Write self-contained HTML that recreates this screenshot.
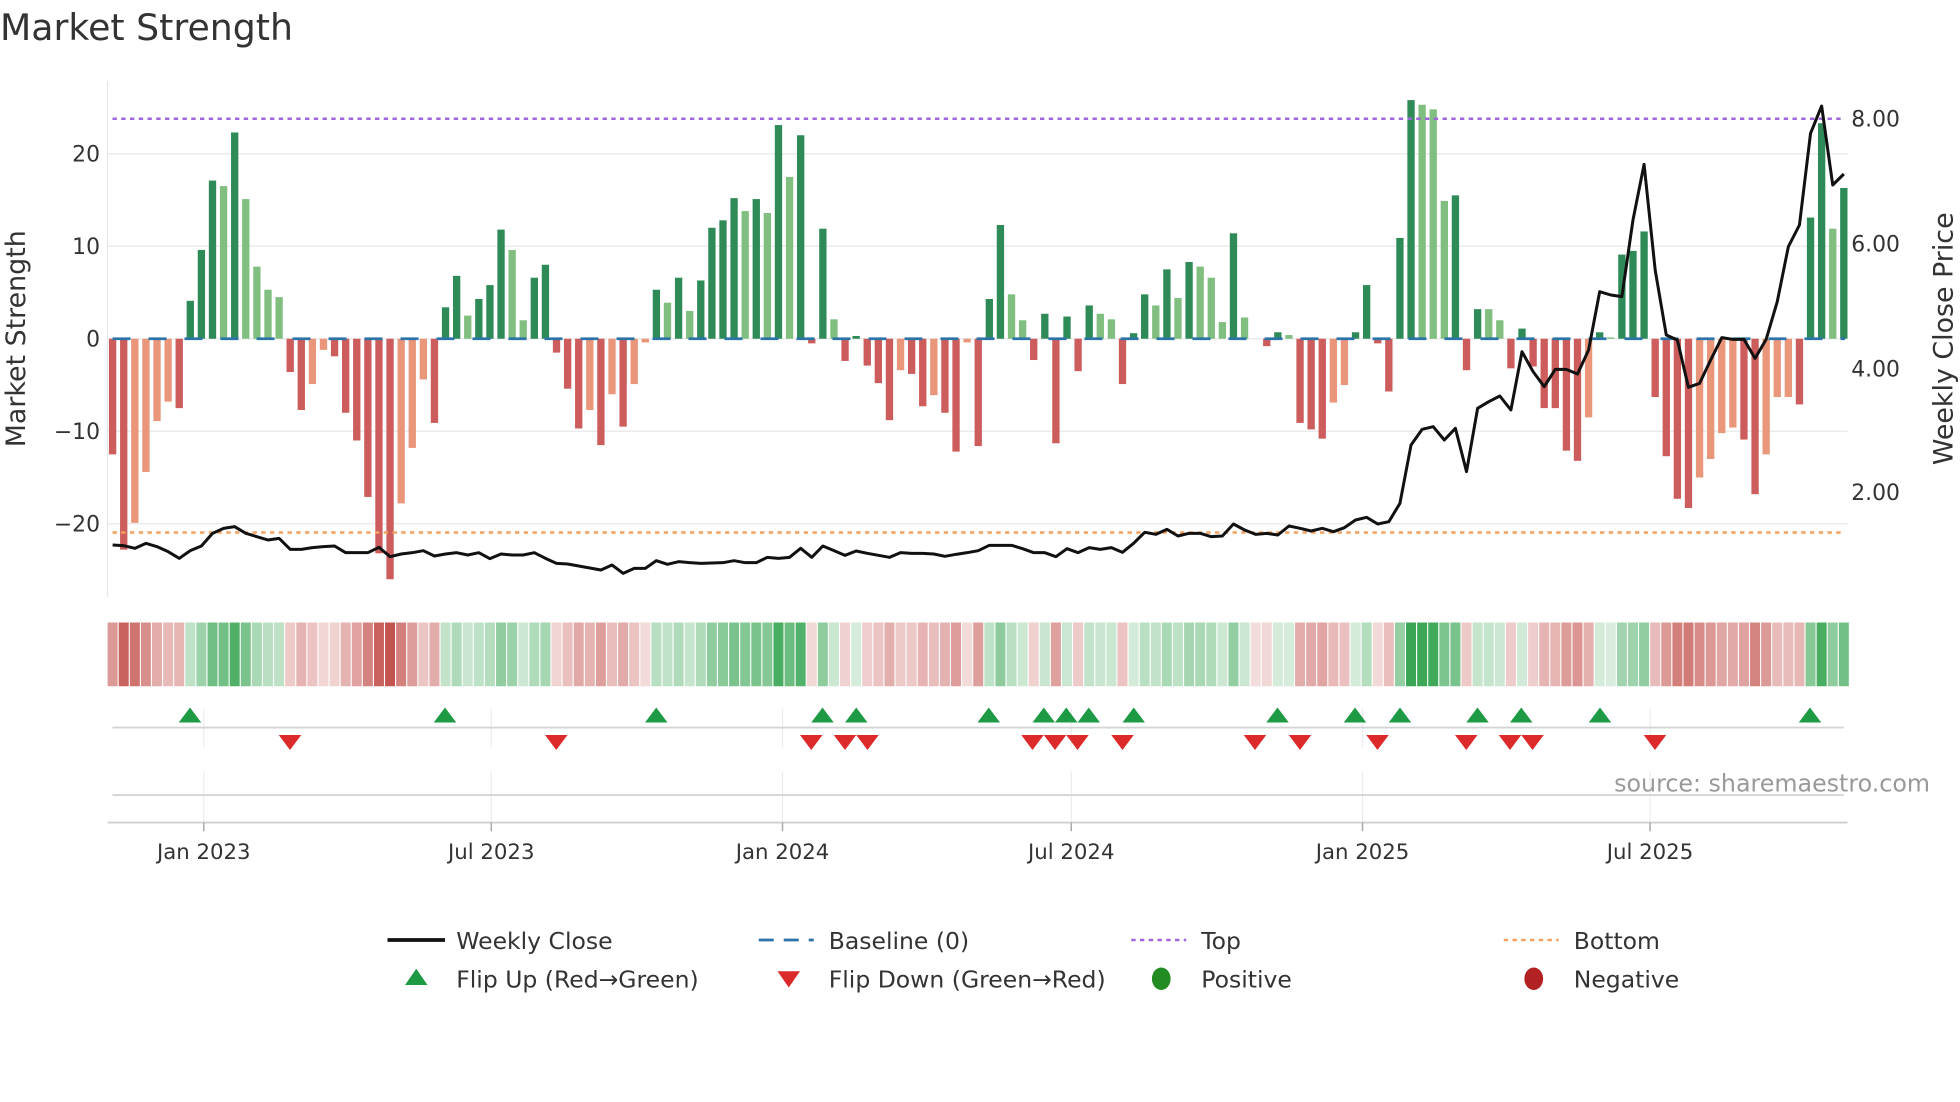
<!DOCTYPE html>
<html><head><meta charset="utf-8">
<style>
html,body{margin:0;padding:0;background:#fff;}
svg{display:block;}
text{font-family:"DejaVu Sans","Liberation Sans",sans-serif;fill:#333;}
.d{fill:#2e8b57}.l{fill:#80bf80}.r{fill:#cd5c5c}.s{fill:#e9967a}
.g{fill:#3aa655}.q{fill:#c4544f}
</style></head><body>
<svg width="1960" height="1102" viewBox="0 0 1568 881.6" xmlns="http://www.w3.org/2000/svg">
<rect width="1568" height="881.6" fill="#fff"/>
<text x="0" y="32" font-size="29">Market Strength</text>

<!-- grid -->
<g stroke="#ebebeb" stroke-width="1.2">
<line x1="86" x2="1478" y1="123" y2="123"/><line x1="86" x2="1478" y1="197" y2="197"/>
<line x1="86" x2="1478" y1="271" y2="271"/><line x1="86" x2="1478" y1="345" y2="345"/>
<line x1="86" x2="1478" y1="419" y2="419"/>
</g>
<line x1="86" x2="86" y1="65" y2="478" stroke="#e6e6e6" stroke-width="1"/>

<!-- left ticks -->
<g font-size="17.5" text-anchor="end">
<text x="80" y="129">20</text><text x="80" y="203">10</text><text x="80" y="277">0</text>
<text x="80" y="351">−10</text><text x="80" y="425">−20</text>
</g>
<g font-size="17.5">
<text x="1481" y="101">8.00</text><text x="1481" y="201">6.00</text>
<text x="1481" y="301">4.00</text><text x="1481" y="400">2.00</text>
</g>
<text font-size="21.5" transform="translate(20,271) rotate(-90)" text-anchor="middle">Market Strength</text>
<text font-size="21.5" transform="translate(1562,271) rotate(-90)" text-anchor="middle">Weekly Close Price</text>

<!-- bars -->
<g transform="translate(81.222,271) scale(8.878,-7.4)">
<rect class="r" x="0.67" width="0.66" y="-12.5" height="12.5"/>
<rect class="r" x="1.67" width="0.66" y="-22.8" height="22.8"/>
<rect class="s" x="2.67" width="0.66" y="-19.9" height="19.9"/>
<rect class="s" x="3.67" width="0.66" y="-14.4" height="14.4"/>
<rect class="s" x="4.67" width="0.66" y="-8.9" height="8.9"/>
<rect class="s" x="5.67" width="0.66" y="-6.8" height="6.8"/>
<rect class="r" x="6.67" width="0.66" y="-7.5" height="7.5"/>
<rect class="d" x="7.67" width="0.66" y="0" height="4.1"/>
<rect class="d" x="8.67" width="0.66" y="0" height="9.6"/>
<rect class="d" x="9.67" width="0.66" y="0" height="17.1"/>
<rect class="l" x="10.67" width="0.66" y="0" height="16.5"/>
<rect class="d" x="11.67" width="0.66" y="0" height="22.3"/>
<rect class="l" x="12.67" width="0.66" y="0" height="15.1"/>
<rect class="l" x="13.67" width="0.66" y="0" height="7.8"/>
<rect class="l" x="14.67" width="0.66" y="0" height="5.3"/>
<rect class="l" x="15.67" width="0.66" y="0" height="4.5"/>
<rect class="r" x="16.67" width="0.66" y="-3.6" height="3.6"/>
<rect class="r" x="17.67" width="0.66" y="-7.7" height="7.7"/>
<rect class="s" x="18.67" width="0.66" y="-4.9" height="4.9"/>
<rect class="s" x="19.67" width="0.66" y="-1.2" height="1.2"/>
<rect class="r" x="20.67" width="0.66" y="-1.9" height="1.9"/>
<rect class="r" x="21.67" width="0.66" y="-8" height="8"/>
<rect class="r" x="22.67" width="0.66" y="-11" height="11"/>
<rect class="r" x="23.67" width="0.66" y="-17.1" height="17.1"/>
<rect class="r" x="24.67" width="0.66" y="-23.2" height="23.2"/>
<rect class="r" x="25.67" width="0.66" y="-26" height="26"/>
<rect class="s" x="26.67" width="0.66" y="-17.8" height="17.8"/>
<rect class="s" x="27.67" width="0.66" y="-11.8" height="11.8"/>
<rect class="s" x="28.67" width="0.66" y="-4.4" height="4.4"/>
<rect class="r" x="29.67" width="0.66" y="-9.1" height="9.1"/>
<rect class="d" x="30.67" width="0.66" y="0" height="3.4"/>
<rect class="d" x="31.67" width="0.66" y="0" height="6.8"/>
<rect class="l" x="32.67" width="0.66" y="0" height="2.5"/>
<rect class="d" x="33.67" width="0.66" y="0" height="4.3"/>
<rect class="d" x="34.67" width="0.66" y="0" height="5.8"/>
<rect class="d" x="35.67" width="0.66" y="0" height="11.8"/>
<rect class="l" x="36.67" width="0.66" y="0" height="9.6"/>
<rect class="l" x="37.67" width="0.66" y="0" height="2"/>
<rect class="d" x="38.67" width="0.66" y="0" height="6.6"/>
<rect class="d" x="39.67" width="0.66" y="0" height="8"/>
<rect class="r" x="40.67" width="0.66" y="-1.5" height="1.5"/>
<rect class="r" x="41.67" width="0.66" y="-5.4" height="5.4"/>
<rect class="r" x="42.67" width="0.66" y="-9.7" height="9.7"/>
<rect class="s" x="43.67" width="0.66" y="-7.7" height="7.7"/>
<rect class="r" x="44.67" width="0.66" y="-11.5" height="11.5"/>
<rect class="s" x="45.67" width="0.66" y="-6" height="6"/>
<rect class="r" x="46.67" width="0.66" y="-9.5" height="9.5"/>
<rect class="s" x="47.67" width="0.66" y="-4.9" height="4.9"/>
<rect class="s" x="48.67" width="0.66" y="-0.4" height="0.4"/>
<rect class="d" x="49.67" width="0.66" y="0" height="5.3"/>
<rect class="l" x="50.67" width="0.66" y="0" height="3.9"/>
<rect class="d" x="51.67" width="0.66" y="0" height="6.6"/>
<rect class="l" x="52.67" width="0.66" y="0" height="3"/>
<rect class="d" x="53.67" width="0.66" y="0" height="6.3"/>
<rect class="d" x="54.67" width="0.66" y="0" height="12"/>
<rect class="d" x="55.67" width="0.66" y="0" height="12.8"/>
<rect class="d" x="56.67" width="0.66" y="0" height="15.2"/>
<rect class="l" x="57.67" width="0.66" y="0" height="13.8"/>
<rect class="d" x="58.67" width="0.66" y="0" height="15.1"/>
<rect class="l" x="59.67" width="0.66" y="0" height="13.6"/>
<rect class="d" x="60.67" width="0.66" y="0" height="23.1"/>
<rect class="l" x="61.67" width="0.66" y="0" height="17.5"/>
<rect class="d" x="62.67" width="0.66" y="0" height="22"/>
<rect class="r" x="63.67" width="0.66" y="-0.5" height="0.5"/>
<rect class="d" x="64.67" width="0.66" y="0" height="11.9"/>
<rect class="l" x="65.67" width="0.66" y="0" height="2.1"/>
<rect class="r" x="66.67" width="0.66" y="-2.4" height="2.4"/>
<rect class="d" x="67.67" width="0.66" y="0" height="0.3"/>
<rect class="r" x="68.67" width="0.66" y="-2.9" height="2.9"/>
<rect class="r" x="69.67" width="0.66" y="-4.8" height="4.8"/>
<rect class="r" x="70.67" width="0.66" y="-8.8" height="8.8"/>
<rect class="s" x="71.67" width="0.66" y="-3.4" height="3.4"/>
<rect class="r" x="72.67" width="0.66" y="-3.8" height="3.8"/>
<rect class="r" x="73.67" width="0.66" y="-7.3" height="7.3"/>
<rect class="s" x="74.67" width="0.66" y="-6.1" height="6.1"/>
<rect class="r" x="75.67" width="0.66" y="-8" height="8"/>
<rect class="r" x="76.67" width="0.66" y="-12.2" height="12.2"/>
<rect class="s" x="77.67" width="0.66" y="-0.4" height="0.4"/>
<rect class="r" x="78.67" width="0.66" y="-11.6" height="11.6"/>
<rect class="d" x="79.67" width="0.66" y="0" height="4.3"/>
<rect class="d" x="80.67" width="0.66" y="0" height="12.3"/>
<rect class="l" x="81.67" width="0.66" y="0" height="4.8"/>
<rect class="l" x="82.67" width="0.66" y="0" height="2"/>
<rect class="r" x="83.67" width="0.66" y="-2.3" height="2.3"/>
<rect class="d" x="84.67" width="0.66" y="0" height="2.7"/>
<rect class="r" x="85.67" width="0.66" y="-11.3" height="11.3"/>
<rect class="d" x="86.67" width="0.66" y="0" height="2.4"/>
<rect class="r" x="87.67" width="0.66" y="-3.5" height="3.5"/>
<rect class="d" x="88.67" width="0.66" y="0" height="3.6"/>
<rect class="l" x="89.67" width="0.66" y="0" height="2.7"/>
<rect class="l" x="90.67" width="0.66" y="0" height="2.1"/>
<rect class="r" x="91.67" width="0.66" y="-4.9" height="4.9"/>
<rect class="d" x="92.67" width="0.66" y="0" height="0.6"/>
<rect class="d" x="93.67" width="0.66" y="0" height="4.8"/>
<rect class="l" x="94.67" width="0.66" y="0" height="3.6"/>
<rect class="d" x="95.67" width="0.66" y="0" height="7.5"/>
<rect class="l" x="96.67" width="0.66" y="0" height="4.4"/>
<rect class="d" x="97.67" width="0.66" y="0" height="8.3"/>
<rect class="l" x="98.67" width="0.66" y="0" height="7.8"/>
<rect class="l" x="99.67" width="0.66" y="0" height="6.6"/>
<rect class="l" x="100.67" width="0.66" y="0" height="1.8"/>
<rect class="d" x="101.67" width="0.66" y="0" height="11.4"/>
<rect class="l" x="102.67" width="0.66" y="0" height="2.3"/>
<rect class="r" x="104.67" width="0.66" y="-0.8" height="0.8"/>
<rect class="d" x="105.67" width="0.66" y="0" height="0.7"/>
<rect class="l" x="106.67" width="0.66" y="0" height="0.4"/>
<rect class="r" x="107.67" width="0.66" y="-9.1" height="9.1"/>
<rect class="r" x="108.67" width="0.66" y="-9.8" height="9.8"/>
<rect class="r" x="109.67" width="0.66" y="-10.8" height="10.8"/>
<rect class="s" x="110.67" width="0.66" y="-6.9" height="6.9"/>
<rect class="s" x="111.67" width="0.66" y="-5" height="5"/>
<rect class="d" x="112.67" width="0.66" y="0" height="0.7"/>
<rect class="d" x="113.67" width="0.66" y="0" height="5.8"/>
<rect class="r" x="114.67" width="0.66" y="-0.5" height="0.5"/>
<rect class="r" x="115.67" width="0.66" y="-5.7" height="5.7"/>
<rect class="d" x="116.67" width="0.66" y="0" height="10.9"/>
<rect class="d" x="117.67" width="0.66" y="0" height="25.8"/>
<rect class="l" x="118.67" width="0.66" y="0" height="25.3"/>
<rect class="l" x="119.67" width="0.66" y="0" height="24.8"/>
<rect class="l" x="120.67" width="0.66" y="0" height="14.9"/>
<rect class="d" x="121.67" width="0.66" y="0" height="15.5"/>
<rect class="r" x="122.67" width="0.66" y="-3.4" height="3.4"/>
<rect class="d" x="123.67" width="0.66" y="0" height="3.2"/>
<rect class="l" x="124.67" width="0.66" y="0" height="3.2"/>
<rect class="l" x="125.67" width="0.66" y="0" height="2"/>
<rect class="r" x="126.67" width="0.66" y="-3.2" height="3.2"/>
<rect class="d" x="127.67" width="0.66" y="0" height="1.1"/>
<rect class="r" x="128.67" width="0.66" y="-3" height="3"/>
<rect class="r" x="129.67" width="0.66" y="-7.5" height="7.5"/>
<rect class="r" x="130.67" width="0.66" y="-7.5" height="7.5"/>
<rect class="r" x="131.67" width="0.66" y="-12.1" height="12.1"/>
<rect class="r" x="132.67" width="0.66" y="-13.2" height="13.2"/>
<rect class="s" x="133.67" width="0.66" y="-8.5" height="8.5"/>
<rect class="d" x="134.67" width="0.66" y="0" height="0.7"/>
<rect class="l" x="135.67" width="0.66" y="0" height="0.15"/>
<rect class="d" x="136.67" width="0.66" y="0" height="9.1"/>
<rect class="d" x="137.67" width="0.66" y="0" height="9.5"/>
<rect class="d" x="138.67" width="0.66" y="0" height="11.6"/>
<rect class="r" x="139.67" width="0.66" y="-6.3" height="6.3"/>
<rect class="r" x="140.67" width="0.66" y="-12.7" height="12.7"/>
<rect class="r" x="141.67" width="0.66" y="-17.3" height="17.3"/>
<rect class="r" x="142.67" width="0.66" y="-18.3" height="18.3"/>
<rect class="s" x="143.67" width="0.66" y="-15" height="15"/>
<rect class="s" x="144.67" width="0.66" y="-13" height="13"/>
<rect class="s" x="145.67" width="0.66" y="-10.2" height="10.2"/>
<rect class="s" x="146.67" width="0.66" y="-9.6" height="9.6"/>
<rect class="r" x="147.67" width="0.66" y="-10.9" height="10.9"/>
<rect class="r" x="148.67" width="0.66" y="-16.8" height="16.8"/>
<rect class="s" x="149.67" width="0.66" y="-12.5" height="12.5"/>
<rect class="s" x="150.67" width="0.66" y="-6.3" height="6.3"/>
<rect class="s" x="151.67" width="0.66" y="-6.3" height="6.3"/>
<rect class="r" x="152.67" width="0.66" y="-7.1" height="7.1"/>
<rect class="d" x="153.67" width="0.66" y="0" height="13.1"/>
<rect class="d" x="154.67" width="0.66" y="0" height="23.3"/>
<rect class="l" x="155.67" width="0.66" y="0" height="11.9"/>
<rect class="d" x="156.67" width="0.66" y="0" height="16.3"/>
</g>

<!-- baseline / top / bottom -->
<line x1="90" x2="1476" y1="271" y2="271" stroke="#2b73a8" stroke-width="2.2" stroke-dasharray="14.4 14.4"/>
<line x1="90" x2="1476" y1="95" y2="95" stroke="#a066dc" stroke-width="2" stroke-dasharray="3.5 3.5"/>
<line x1="90" x2="1476" y1="426" y2="426" stroke="#f2a160" stroke-width="2" stroke-dasharray="3.5 3.5"/>

<!-- price -->
<g transform="translate(81.222,80) scale(8.878,0.266667)">
<polyline fill="none" stroke="#111" stroke-width="3" vector-effect="non-scaling-stroke" stroke-linejoin="round" points="1,1335 2,1337 3,1345 4,1330 5,1340 6,1355 7,1375 8,1352 9,1338 10,1300 11,1285 12,1280 13,1300 14,1310 15,1320 16,1315 17,1348 18,1348 19,1343 20,1340 21,1338 22,1358 23,1358 24,1358 25,1342 26,1370 27,1362 28,1358 29,1352 30,1368 31,1362 32,1358 33,1365 34,1358 35,1376 36,1362 37,1365 38,1365 39,1358 40,1375 41,1390 42,1392 43,1398 44,1404 45,1410 46,1395 47,1420 48,1405 49,1405 50,1382 51,1393 52,1385 53,1388 54,1390 55,1389 56,1388 57,1382 58,1388 59,1388 60,1372 61,1375 62,1372 63,1345 64,1372 65,1338 66,1352 67,1366 68,1353 69,1360 70,1366 71,1372 72,1358 73,1360 74,1360 75,1362 76,1369 77,1363 78,1358 79,1352 80,1336 81,1336 82,1336 83,1346 84,1358 85,1358 86,1370 87,1346 88,1358 89,1343 90,1348 91,1343 92,1357 93,1330 94,1297 95,1303 96,1288 97,1308 98,1300 99,1300 100,1310 101,1308 102,1272 103,1290 104,1303 105,1300 106,1305 107,1278 108,1285 109,1293 110,1285 111,1295 112,1283 113,1260 114,1252 115,1272 116,1265 117,1210 118,1035 119,988 120,980 121,1020 122,985 123,1115 124,925 125,905 126,888 127,930 128,755 129,815 130,860 131,808 132,808 133,822 134,750 135,575 136,585 137,590 138,360 139,193 140,510 141,705 142,720 143,862 144,850 145,780 146,713 147,718 148,718 149,775 150,718 151,605 152,440 153,375 154,100 155,18 156,255 157,222"/>
</g>

<!-- heat strip -->
<g transform="translate(81.222,498) scale(8.878,1)">
<rect class="q" x="0.55" width="0.9" height="51" fill-opacity=".59"/>
<rect class="q" x="1.55" width="0.9" height="51" fill-opacity=".91"/>
<rect class="q" x="2.55" width="0.9" height="51" fill-opacity=".82"/>
<rect class="q" x="3.55" width="0.9" height="51" fill-opacity=".65"/>
<rect class="q" x="4.55" width="0.9" height="51" fill-opacity=".48"/>
<rect class="q" x="5.55" width="0.9" height="51" fill-opacity=".41"/>
<rect class="q" x="6.55" width="0.9" height="51" fill-opacity=".43"/>
<rect class="g" x="7.55" width="0.9" height="51" fill-opacity=".33"/>
<rect class="g" x="8.55" width="0.9" height="51" fill-opacity=".5"/>
<rect class="g" x="9.55" width="0.9" height="51" fill-opacity=".73"/>
<rect class="g" x="10.55" width="0.9" height="51" fill-opacity=".71"/>
<rect class="g" x="11.55" width="0.9" height="51" fill-opacity=".89"/>
<rect class="g" x="12.55" width="0.9" height="51" fill-opacity=".67"/>
<rect class="g" x="13.55" width="0.9" height="51" fill-opacity=".44"/>
<rect class="g" x="14.55" width="0.9" height="51" fill-opacity=".36"/>
<rect class="g" x="15.55" width="0.9" height="51" fill-opacity=".34"/>
<rect class="q" x="16.55" width="0.9" height="51" fill-opacity=".31"/>
<rect class="q" x="17.55" width="0.9" height="51" fill-opacity=".44"/>
<rect class="q" x="18.55" width="0.9" height="51" fill-opacity=".35"/>
<rect class="q" x="19.55" width="0.9" height="51" fill-opacity=".24"/>
<rect class="q" x="20.55" width="0.9" height="51" fill-opacity=".26"/>
<rect class="q" x="21.55" width="0.9" height="51" fill-opacity=".45"/>
<rect class="q" x="22.55" width="0.9" height="51" fill-opacity=".54"/>
<rect class="q" x="23.55" width="0.9" height="51" fill-opacity=".73"/>
<rect class="q" x="24.55" width="0.9" height="51" fill-opacity=".92"/>
<rect class="q" x="25.55" width="0.9" height="51" fill-opacity="1"/>
<rect class="q" x="26.55" width="0.9" height="51" fill-opacity=".75"/>
<rect class="q" x="27.55" width="0.9" height="51" fill-opacity=".57"/>
<rect class="q" x="28.55" width="0.9" height="51" fill-opacity=".34"/>
<rect class="q" x="29.55" width="0.9" height="51" fill-opacity=".48"/>
<rect class="g" x="30.55" width="0.9" height="51" fill-opacity=".31"/>
<rect class="g" x="31.55" width="0.9" height="51" fill-opacity=".41"/>
<rect class="g" x="32.55" width="0.9" height="51" fill-opacity=".28"/>
<rect class="g" x="33.55" width="0.9" height="51" fill-opacity=".33"/>
<rect class="g" x="34.55" width="0.9" height="51" fill-opacity=".38"/>
<rect class="g" x="35.55" width="0.9" height="51" fill-opacity=".57"/>
<rect class="g" x="36.55" width="0.9" height="51" fill-opacity=".5"/>
<rect class="g" x="37.55" width="0.9" height="51" fill-opacity=".26"/>
<rect class="g" x="38.55" width="0.9" height="51" fill-opacity=".4"/>
<rect class="g" x="39.55" width="0.9" height="51" fill-opacity=".45"/>
<rect class="q" x="40.55" width="0.9" height="51" fill-opacity=".25"/>
<rect class="q" x="41.55" width="0.9" height="51" fill-opacity=".37"/>
<rect class="q" x="42.55" width="0.9" height="51" fill-opacity=".5"/>
<rect class="q" x="43.55" width="0.9" height="51" fill-opacity=".44"/>
<rect class="q" x="44.55" width="0.9" height="51" fill-opacity=".56"/>
<rect class="q" x="45.55" width="0.9" height="51" fill-opacity=".39"/>
<rect class="q" x="46.55" width="0.9" height="51" fill-opacity=".49"/>
<rect class="q" x="47.55" width="0.9" height="51" fill-opacity=".35"/>
<rect class="q" x="48.55" width="0.9" height="51" fill-opacity=".21"/>
<rect class="g" x="49.55" width="0.9" height="51" fill-opacity=".36"/>
<rect class="g" x="50.55" width="0.9" height="51" fill-opacity=".32"/>
<rect class="g" x="51.55" width="0.9" height="51" fill-opacity=".4"/>
<rect class="g" x="52.55" width="0.9" height="51" fill-opacity=".29"/>
<rect class="g" x="53.55" width="0.9" height="51" fill-opacity=".4"/>
<rect class="g" x="54.55" width="0.9" height="51" fill-opacity=".57"/>
<rect class="g" x="55.55" width="0.9" height="51" fill-opacity=".6"/>
<rect class="g" x="56.55" width="0.9" height="51" fill-opacity=".67"/>
<rect class="g" x="57.55" width="0.9" height="51" fill-opacity=".63"/>
<rect class="g" x="58.55" width="0.9" height="51" fill-opacity=".67"/>
<rect class="g" x="59.55" width="0.9" height="51" fill-opacity=".62"/>
<rect class="g" x="60.55" width="0.9" height="51" fill-opacity=".92"/>
<rect class="g" x="61.55" width="0.9" height="51" fill-opacity=".74"/>
<rect class="g" x="62.55" width="0.9" height="51" fill-opacity=".88"/>
<rect class="q" x="63.55" width="0.9" height="51" fill-opacity=".22"/>
<rect class="g" x="64.55" width="0.9" height="51" fill-opacity=".57"/>
<rect class="g" x="65.55" width="0.9" height="51" fill-opacity=".27"/>
<rect class="q" x="66.55" width="0.9" height="51" fill-opacity=".27"/>
<rect class="g" x="67.55" width="0.9" height="51" fill-opacity=".21"/>
<rect class="q" x="68.55" width="0.9" height="51" fill-opacity=".29"/>
<rect class="q" x="69.55" width="0.9" height="51" fill-opacity=".35"/>
<rect class="q" x="70.55" width="0.9" height="51" fill-opacity=".47"/>
<rect class="q" x="71.55" width="0.9" height="51" fill-opacity=".31"/>
<rect class="q" x="72.55" width="0.9" height="51" fill-opacity=".32"/>
<rect class="q" x="73.55" width="0.9" height="51" fill-opacity=".43"/>
<rect class="q" x="74.55" width="0.9" height="51" fill-opacity=".39"/>
<rect class="q" x="75.55" width="0.9" height="51" fill-opacity=".45"/>
<rect class="q" x="76.55" width="0.9" height="51" fill-opacity=".58"/>
<rect class="q" x="77.55" width="0.9" height="51" fill-opacity=".21"/>
<rect class="q" x="78.55" width="0.9" height="51" fill-opacity=".56"/>
<rect class="g" x="79.55" width="0.9" height="51" fill-opacity=".33"/>
<rect class="g" x="80.55" width="0.9" height="51" fill-opacity=".58"/>
<rect class="g" x="81.55" width="0.9" height="51" fill-opacity=".35"/>
<rect class="g" x="82.55" width="0.9" height="51" fill-opacity=".26"/>
<rect class="q" x="83.55" width="0.9" height="51" fill-opacity=".27"/>
<rect class="g" x="84.55" width="0.9" height="51" fill-opacity=".28"/>
<rect class="q" x="85.55" width="0.9" height="51" fill-opacity=".55"/>
<rect class="g" x="86.55" width="0.9" height="51" fill-opacity=".27"/>
<rect class="q" x="87.55" width="0.9" height="51" fill-opacity=".31"/>
<rect class="g" x="88.55" width="0.9" height="51" fill-opacity=".31"/>
<rect class="g" x="89.55" width="0.9" height="51" fill-opacity=".28"/>
<rect class="g" x="90.55" width="0.9" height="51" fill-opacity=".27"/>
<rect class="q" x="91.55" width="0.9" height="51" fill-opacity=".35"/>
<rect class="g" x="92.55" width="0.9" height="51" fill-opacity=".22"/>
<rect class="g" x="93.55" width="0.9" height="51" fill-opacity=".35"/>
<rect class="g" x="94.55" width="0.9" height="51" fill-opacity=".31"/>
<rect class="g" x="95.55" width="0.9" height="51" fill-opacity=".43"/>
<rect class="g" x="96.55" width="0.9" height="51" fill-opacity=".34"/>
<rect class="g" x="97.55" width="0.9" height="51" fill-opacity=".46"/>
<rect class="g" x="98.55" width="0.9" height="51" fill-opacity=".44"/>
<rect class="g" x="99.55" width="0.9" height="51" fill-opacity=".4"/>
<rect class="g" x="100.55" width="0.9" height="51" fill-opacity=".26"/>
<rect class="g" x="101.55" width="0.9" height="51" fill-opacity=".55"/>
<rect class="g" x="102.55" width="0.9" height="51" fill-opacity=".27"/>
<rect class="q" x="103.55" width="0.9" height="51" fill-opacity=".2"/>
<rect class="q" x="104.55" width="0.9" height="51" fill-opacity=".23"/>
<rect class="g" x="105.55" width="0.9" height="51" fill-opacity=".22"/>
<rect class="g" x="106.55" width="0.9" height="51" fill-opacity=".21"/>
<rect class="q" x="107.55" width="0.9" height="51" fill-opacity=".48"/>
<rect class="q" x="108.55" width="0.9" height="51" fill-opacity=".5"/>
<rect class="q" x="109.55" width="0.9" height="51" fill-opacity=".53"/>
<rect class="q" x="110.55" width="0.9" height="51" fill-opacity=".41"/>
<rect class="q" x="111.55" width="0.9" height="51" fill-opacity=".36"/>
<rect class="g" x="112.55" width="0.9" height="51" fill-opacity=".22"/>
<rect class="g" x="113.55" width="0.9" height="51" fill-opacity=".38"/>
<rect class="q" x="114.55" width="0.9" height="51" fill-opacity=".22"/>
<rect class="q" x="115.55" width="0.9" height="51" fill-opacity=".38"/>
<rect class="g" x="116.55" width="0.9" height="51" fill-opacity=".54"/>
<rect class="g" x="117.55" width="0.9" height="51" fill-opacity="1"/>
<rect class="g" x="118.55" width="0.9" height="51" fill-opacity=".98"/>
<rect class="g" x="119.55" width="0.9" height="51" fill-opacity=".97"/>
<rect class="g" x="120.55" width="0.9" height="51" fill-opacity=".66"/>
<rect class="g" x="121.55" width="0.9" height="51" fill-opacity=".68"/>
<rect class="q" x="122.55" width="0.9" height="51" fill-opacity=".31"/>
<rect class="g" x="123.55" width="0.9" height="51" fill-opacity=".3"/>
<rect class="g" x="124.55" width="0.9" height="51" fill-opacity=".3"/>
<rect class="g" x="125.55" width="0.9" height="51" fill-opacity=".26"/>
<rect class="q" x="126.55" width="0.9" height="51" fill-opacity=".3"/>
<rect class="g" x="127.55" width="0.9" height="51" fill-opacity=".23"/>
<rect class="q" x="128.55" width="0.9" height="51" fill-opacity=".29"/>
<rect class="q" x="129.55" width="0.9" height="51" fill-opacity=".43"/>
<rect class="q" x="130.55" width="0.9" height="51" fill-opacity=".43"/>
<rect class="q" x="131.55" width="0.9" height="51" fill-opacity=".58"/>
<rect class="q" x="132.55" width="0.9" height="51" fill-opacity=".61"/>
<rect class="q" x="133.55" width="0.9" height="51" fill-opacity=".46"/>
<rect class="g" x="134.55" width="0.9" height="51" fill-opacity=".22"/>
<rect class="g" x="135.55" width="0.9" height="51" fill-opacity=".2"/>
<rect class="g" x="136.55" width="0.9" height="51" fill-opacity=".48"/>
<rect class="g" x="137.55" width="0.9" height="51" fill-opacity=".49"/>
<rect class="g" x="138.55" width="0.9" height="51" fill-opacity=".56"/>
<rect class="q" x="139.55" width="0.9" height="51" fill-opacity=".4"/>
<rect class="q" x="140.55" width="0.9" height="51" fill-opacity=".59"/>
<rect class="q" x="141.55" width="0.9" height="51" fill-opacity=".74"/>
<rect class="q" x="142.55" width="0.9" height="51" fill-opacity=".77"/>
<rect class="q" x="143.55" width="0.9" height="51" fill-opacity=".67"/>
<rect class="q" x="144.55" width="0.9" height="51" fill-opacity=".6"/>
<rect class="q" x="145.55" width="0.9" height="51" fill-opacity=".52"/>
<rect class="q" x="146.55" width="0.9" height="51" fill-opacity=".5"/>
<rect class="q" x="147.55" width="0.9" height="51" fill-opacity=".54"/>
<rect class="q" x="148.55" width="0.9" height="51" fill-opacity=".72"/>
<rect class="q" x="149.55" width="0.9" height="51" fill-opacity=".59"/>
<rect class="q" x="150.55" width="0.9" height="51" fill-opacity=".4"/>
<rect class="q" x="151.55" width="0.9" height="51" fill-opacity=".4"/>
<rect class="q" x="152.55" width="0.9" height="51" fill-opacity=".42"/>
<rect class="g" x="153.55" width="0.9" height="51" fill-opacity=".61"/>
<rect class="g" x="154.55" width="0.9" height="51" fill-opacity=".92"/>
<rect class="g" x="155.55" width="0.9" height="51" fill-opacity=".57"/>
<rect class="g" x="156.55" width="0.9" height="51" fill-opacity=".71"/>
</g>

<!-- lower panels -->
<g stroke="#ececec" stroke-width="1">
<line x1="163" x2="163" y1="567" y2="598"/><line x1="393" x2="393" y1="567" y2="598"/>
<line x1="626" x2="626" y1="567" y2="598"/><line x1="857" x2="857" y1="567" y2="598"/>
<line x1="1090" x2="1090" y1="567" y2="598"/><line x1="1320" x2="1320" y1="567" y2="598"/>
<line x1="163" x2="163" y1="617" y2="658"/><line x1="393" x2="393" y1="617" y2="658"/>
<line x1="626" x2="626" y1="617" y2="658"/><line x1="857" x2="857" y1="617" y2="658"/>
<line x1="1090" x2="1090" y1="617" y2="658"/><line x1="1320" x2="1320" y1="617" y2="658"/>
</g>
<line x1="90" x2="1475" y1="582" y2="582" stroke="#d4d4d4" stroke-width="1.5"/>
<line x1="90" x2="1475" y1="636" y2="636" stroke="#d4d4d4" stroke-width="1.5"/>
<line x1="86" x2="1478" y1="658" y2="658" stroke="#cfcfcf" stroke-width="1.5"/>
<g stroke="#aaa" stroke-width="1.2">
<line x1="163" x2="163" y1="658" y2="665"/><line x1="393" x2="393" y1="658" y2="665"/>
<line x1="626" x2="626" y1="658" y2="665"/><line x1="857" x2="857" y1="658" y2="665"/>
<line x1="1090" x2="1090" y1="658" y2="665"/><line x1="1320" x2="1320" y1="658" y2="665"/>
</g>
<g font-size="17" text-anchor="middle">
<text x="163" y="687">Jan 2023</text><text x="393" y="687">Jul 2023</text>
<text x="626" y="687">Jan 2024</text><text x="857" y="687">Jul 2024</text>
<text x="1090" y="687">Jan 2025</text><text x="1320" y="687">Jul 2025</text>
</g>
<text x="1544" y="633" font-size="19" text-anchor="end" style="fill:#999">source: sharemaestro.com</text>

<!-- flip markers -->
<g fill="#1e9a44">
<path d="M143,578h18l-9,-12z"/><path d="M347,578h18l-9,-12z"/><path d="M516,578h18l-9,-12z"/>
<path d="M649,578h18l-9,-12z"/><path d="M676,578h18l-9,-12z"/><path d="M782,578h18l-9,-12z"/>
<path d="M826,578h18l-9,-12z"/><path d="M844,578h18l-9,-12z"/><path d="M862,578h18l-9,-12z"/>
<path d="M898,578h18l-9,-12z"/><path d="M1013,578h18l-9,-12z"/><path d="M1075,578h18l-9,-12z"/>
<path d="M1111,578h18l-9,-12z"/><path d="M1173,578h18l-9,-12z"/><path d="M1208,578h18l-9,-12z"/>
<path d="M1271,578h18l-9,-12z"/><path d="M1439,578h18l-9,-12z"/>
</g>
<g fill="#dc2a2a">
<path d="M223,588h18l-9,12z"/><path d="M436,588h18l-9,12z"/><path d="M640,588h18l-9,12z"/>
<path d="M667,588h18l-9,12z"/><path d="M685,588h18l-9,12z"/><path d="M817,588h18l-9,12z"/>
<path d="M835,588h18l-9,12z"/><path d="M853,588h18l-9,12z"/><path d="M889,588h18l-9,12z"/>
<path d="M995,588h18l-9,12z"/><path d="M1031,588h18l-9,12z"/><path d="M1093,588h18l-9,12z"/>
<path d="M1164,588h18l-9,12z"/><path d="M1199,588h18l-9,12z"/><path d="M1217,588h18l-9,12z"/>
<path d="M1315,588h18l-9,12z"/>
</g>

<!-- legend -->
<g font-size="18.8">
<line x1="310" x2="356" y1="752" y2="752" stroke="#111" stroke-width="3"/>
<text x="365" y="759">Weekly Close</text>
<line x1="607" x2="651" y1="752" y2="752" stroke="#2b73a8" stroke-width="2.2" stroke-dasharray="12 8"/>
<text x="663" y="759">Baseline (0)</text>
<line x1="905" x2="949" y1="752" y2="752" stroke="#a066dc" stroke-width="2" stroke-dasharray="3.5 3.5"/>
<text x="961" y="759">Top</text>
<line x1="1203" x2="1247" y1="752" y2="752" stroke="#f2a160" stroke-width="2" stroke-dasharray="3.5 3.5"/>
<text x="1259" y="759">Bottom</text>
<path d="M324,788h18l-9,-13z" fill="#1e9a44"/>
<text x="365" y="790">Flip Up (Red→Green)</text>
<path d="M622,777h18l-9,13z" fill="#dc2a2a"/>
<text x="663" y="790">Flip Down (Green→Red)</text>
<ellipse cx="929" cy="783" rx="7.5" ry="9" fill="#228b22"/>
<text x="961" y="790">Positive</text>
<ellipse cx="1227" cy="783" rx="7.5" ry="9" fill="#b22222"/>
<text x="1259" y="790">Negative</text>
</g>
</svg>
</body></html>
